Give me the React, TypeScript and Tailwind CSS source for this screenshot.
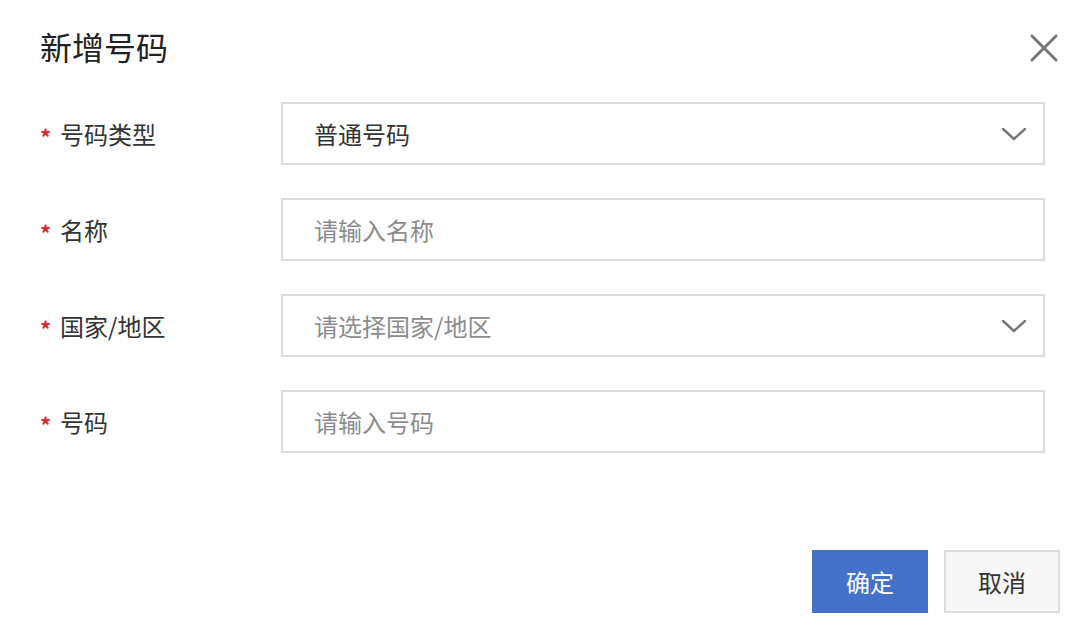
import React from "react";

const font = { fontFamily: '"Noto Sans CJK SC", "Noto Sans", sans-serif' };

function Chevron() {
  return (
    <svg width="26" height="16" viewBox="0 0 26 16" fill="none">
      <path d="M2 3 L13 13 L24 3" stroke="#777" strokeWidth="2.4" strokeLinecap="round" strokeLinejoin="round" />
    </svg>
  );
}

function Row({ label, children }: { label: string; children: React.ReactNode }) {
  return (
    <div className="flex items-center h-[63px]">
      <div className="w-[241px] flex items-center text-[24px] text-[#333] leading-none">
        <span className="text-[#e0262e] text-[22px] font-bold w-[20px] mt-[4px]">*</span>
        <span>{label}</span>
      </div>
      {children}
    </div>
  );
}

export default function App() {
  return (
    <div className="w-[1092px] h-[636px] bg-white relative overflow-hidden" style={font}>
      <div className="pl-[40px] pt-[24px] text-[32px] leading-[44px] text-[#222]">新增号码</div>
      <button className="absolute left-[1028px] top-[32px] w-[32px] h-[32px] flex items-center justify-center">
        <svg width="30" height="30" viewBox="0 0 30 30" fill="none">
          <path d="M3 3 L27 27 M27 3 L3 27" stroke="#777" strokeWidth="3" strokeLinecap="round" />
        </svg>
      </button>
      <div className="pl-[40px] pr-[47px] pt-[34px] flex flex-col gap-[33px]">
        <Row label="号码类型">
          <div className="flex-1 h-[63px] border-2 border-[#dcdcdc] flex items-center justify-between pl-[31px] pr-[16px] text-[24px] text-[#333]">
            <span>普通号码</span>
            <Chevron />
          </div>
        </Row>
        <Row label="名称">
          <div className="flex-1 h-[63px] border-2 border-[#dcdcdc] flex items-center pl-[31px] text-[24px] text-[#8c8c8c]">
            请输入名称
          </div>
        </Row>
        <Row label="国家/地区">
          <div className="flex-1 h-[63px] border-2 border-[#dcdcdc] flex items-center justify-between pl-[31px] pr-[16px] text-[24px] text-[#8c8c8c]">
            <span>请选择国家/地区</span>
            <Chevron />
          </div>
        </Row>
        <Row label="号码">
          <div className="flex-1 h-[63px] border-2 border-[#dcdcdc] flex items-center pl-[31px] text-[24px] text-[#8c8c8c]">
            请输入号码
          </div>
        </Row>
      </div>
      <div className="absolute left-[812px] top-[550px] flex gap-[16px]">
        <button className="w-[116px] h-[63px] bg-[#4472c8] text-white text-[24px] flex items-center justify-center">确定</button>
        <button className="w-[116px] h-[63px] bg-[#f7f7f7] border-2 border-[#dddddd] text-[#333] text-[24px] flex items-center justify-center">取消</button>
      </div>
    </div>
  );
}
